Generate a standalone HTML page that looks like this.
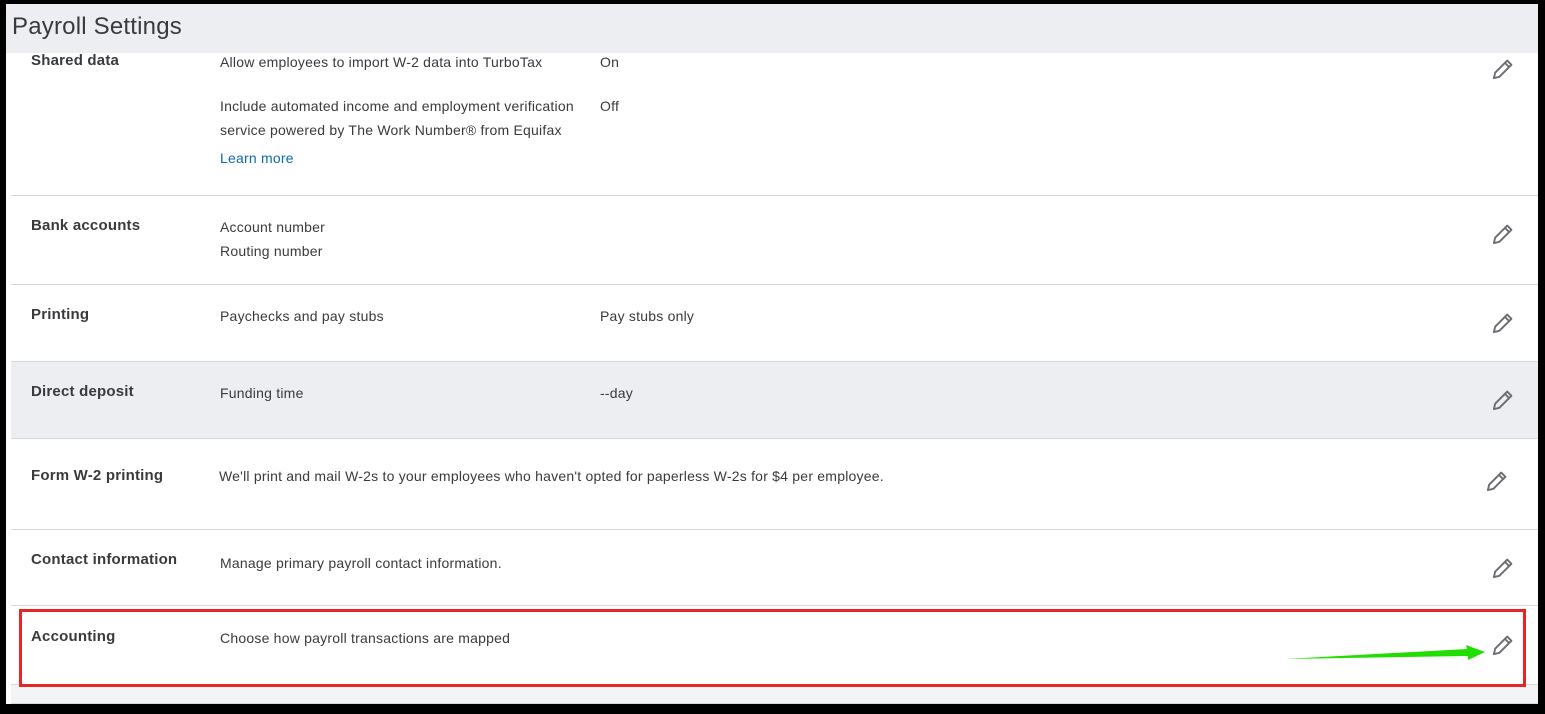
<!DOCTYPE html>
<html><head><meta charset="utf-8"><style>
*{margin:0;padding:0;box-sizing:border-box}
body{width:1545px;height:714px;background:#000;position:relative;overflow:hidden;font-family:"Liberation Sans",sans-serif;color:#393a3d}
#pg{position:absolute;left:6px;top:4px;width:1532px;height:700px;background:#fff}
.hd{position:absolute;left:0;top:0;width:1532px;height:49px;background:#eceef1}
.hd span{position:absolute;left:6px;top:9px;font-size:24px;color:#393a3d;letter-spacing:0.2px}
.t{position:absolute;font-size:14px;white-space:nowrap;letter-spacing:0.22px}
.b{position:absolute;font-size:15px;font-weight:bold;white-space:nowrap;letter-spacing:0.2px}
.ln{position:absolute;left:5px;width:1527px;height:1px;background:#d4d7dc}
.gray{position:absolute;left:5px;width:1527px;background:#eceef1}
a{color:#0d6baa;text-decoration:none}
</style></head><body>
<div id="pg">
<div class="hd"><span>Payroll Settings</span></div>
<div class="gray" style="top:357px;height:77px"></div>
<div class="gray" style="top:680px;height:20px;background:#f3f4f6"></div>
<div class="ln" style="top:191px"></div>
<div class="ln" style="top:280px"></div>
<div class="ln" style="top:357px"></div>
<div class="ln" style="top:434px"></div>
<div class="ln" style="top:525px"></div>
<div class="ln" style="top:601px"></div>
<div class="ln" style="top:680px"></div>
<div class="ln" style="top:699px"></div>

<div class="b" style="left:25px;top:48px">Shared data</div>
<div class="t" style="left:214px;top:50px">Allow employees to import W-2 data into TurboTax</div>
<div class="t" style="left:594px;top:50px">On</div>
<div class="t" style="left:214px;top:90px;line-height:24px;white-space:normal;width:375px">Include automated income and employment verification service powered by The Work Number® from Equifax</div>
<div class="t" style="left:594px;top:94px">Off</div>
<div class="t" style="left:214px;top:146px"><a>Learn more</a></div>

<div class="b" style="left:25px;top:213px">Bank accounts</div>
<div class="t" style="left:214px;top:215px">Account number</div>
<div class="t" style="left:214px;top:239px">Routing number</div>

<div class="b" style="left:25px;top:302px">Printing</div>
<div class="t" style="left:214px;top:304px">Paychecks and pay stubs</div>
<div class="t" style="left:594px;top:304px">Pay stubs only</div>

<div class="b" style="left:25px;top:379px">Direct deposit</div>
<div class="t" style="left:214px;top:381px">Funding time</div>
<div class="t" style="left:594px;top:381px">--day</div>

<div class="b" style="left:25px;top:463px">Form W-2 printing</div>
<div class="t" style="left:213px;top:464px">We'll print and mail W-2s to your employees who haven't opted for paperless W-2s for $4 per employee.</div>

<div class="b" style="left:25px;top:547px">Contact information</div>
<div class="t" style="left:214px;top:551px">Manage primary payroll contact information.</div>

<div class="b" style="left:25px;top:624px">Accounting</div>
<div class="t" style="left:214px;top:626px">Choose how payroll transactions are mapped</div>

<div style="position:absolute;left:13px;top:605px;width:1507px;height:78px;border:3px solid #e82424"></div>
</div>

<svg width="1545" height="714" style="position:absolute;left:0;top:0">
<defs><symbol id="p" viewBox="0 0 20 20"><path d="M14.5 1.5 L18.5 5.5 L7 17 L1.8 18.2 L3 13 Z M12.3 3.7 L16.3 7.7" fill="none" stroke="#6b6c72" stroke-width="1.8" stroke-linejoin="round"/></symbol></defs>
<use href="#p" x="1492" y="59" width="21" height="21"/>
<use href="#p" x="1492" y="224" width="21" height="21"/>
<use href="#p" x="1492" y="313" width="21" height="21"/>
<use href="#p" x="1492" y="390" width="21" height="21"/>
<use href="#p" x="1486" y="471" width="21" height="21"/>
<use href="#p" x="1492" y="558" width="21" height="21"/>
<use href="#p" x="1492" y="635" width="21" height="21"/>
<polygon points="1285,659 1467,649 1466,645 1485,652 1468,660 1468,656" fill="#22dd00"/>
</svg>
</body></html>
